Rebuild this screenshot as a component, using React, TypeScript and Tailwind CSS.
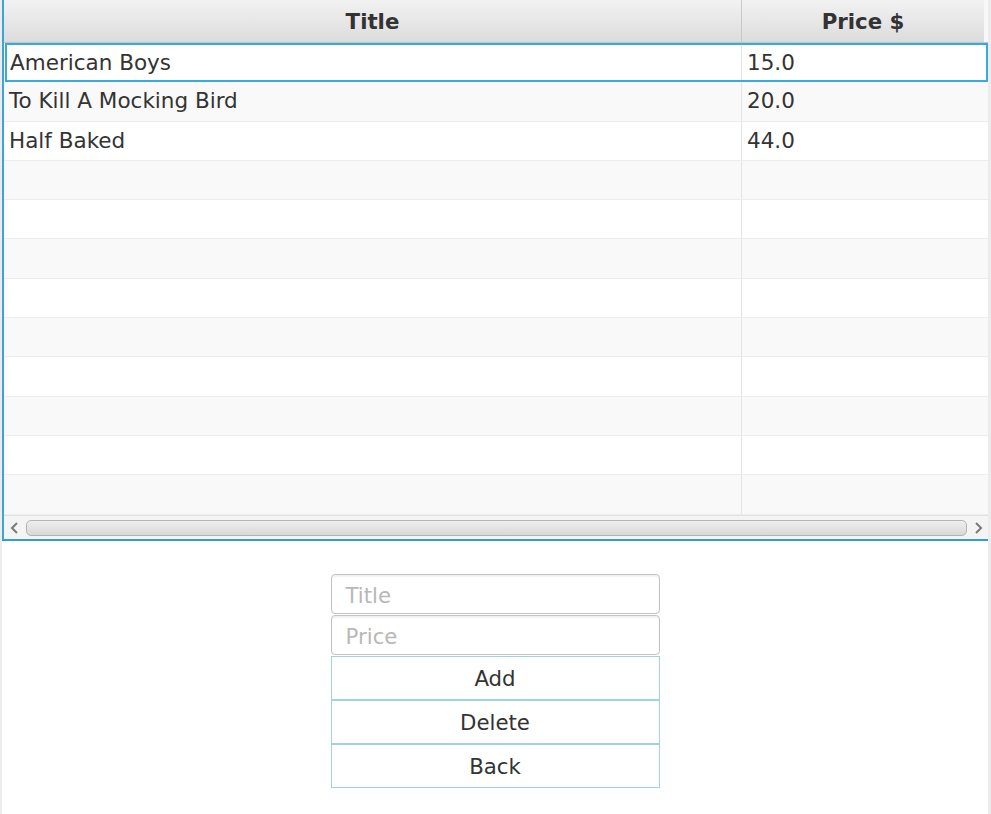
import React from "react";

const rows = [
  { title: "American Boys", price: "15.0" },
  { title: "To Kill A Mocking Bird", price: "20.0" },
  { title: "Half Baked", price: "44.0" },
];

export default function App() {
  const all = Array.from({ length: 13 }, (_, i) => rows[i] ?? null);
  return (
    <div
      className="w-[991px] h-[814px] bg-white flex flex-col border-l-[2px] border-r-[3px] border-[#ececec] overflow-hidden text-[#333]"
      style={{ fontFamily: '"DejaVu Sans", Verdana, sans-serif' }}
    >
      {/* Table */}
      <div className="h-[541px] flex flex-col border-l-2 border-b-2 border-l-[#3aa6d8] border-b-[#2c9fd5] bg-white">
        {/* header */}
        <div className="h-[43px] flex border-b border-[#c4c4c4] shrink-0">
          <div className="w-[738px] flex items-center justify-center pt-[2px] font-bold text-[21.3px] bg-gradient-to-b from-[#f2f2f2] to-[#dcdcdc] border-r border-[#c8c8c8]">
            Title
          </div>
          <div className="w-[242px] flex items-center justify-center pt-[2px] font-bold text-[21.3px] bg-gradient-to-b from-[#f2f2f2] to-[#dcdcdc]">
            Price $
          </div>
          <div className="flex-1 bg-[#f8f8f8]" />
        </div>
        {/* rows */}
        <div className="h-[472px] overflow-hidden shrink-0">
          {all.map((r, i) => {
            const sel = i === 0;
            return (
              <div
                key={i}
                className={`h-[39.3px] flex text-[21.5px] ${
                  sel
                    ? "bg-white border-2 border-[#3aaad9] ml-[1px]"
                    : i % 2 === 1
                    ? "bg-[#f9f9f9] border-b border-[#ececec]"
                    : "bg-white border-b border-[#ececec]"
                }`}
              >
                <div
                  className={`${sel ? "w-[735px] pl-[3px]" : "w-[738px] pl-[5px]"} flex items-center border-r border-[#e4e4e4]`}
                >
                  {r?.title}
                </div>
                <div className="flex-1 flex items-center pl-[5px]">{r?.price}</div>
              </div>
            );
          })}
        </div>
        {/* scrollbar */}
        <div className="h-[24px] flex items-center bg-[#f4f4f4] shrink-0 border-t border-[#e2e2e2]">
          <svg width="18" height="20" viewBox="0 0 18 20" className="ml-[2px] shrink-0">
            <path d="M11 5 L6 10 L11 15" fill="none" stroke="#7a7a7a" strokeWidth="2" />
          </svg>
          <div className="flex-1 h-[16px] mx-[2px] rounded-[5px] border border-[#b4b4b4] bg-gradient-to-b from-[#eeeeee] to-[#d8d8d8]" />
          <svg width="18" height="20" viewBox="0 0 18 20" className="mr-[1px] shrink-0">
            <path d="M7 5 L12 10 L7 15" fill="none" stroke="#7a7a7a" strokeWidth="2" />
          </svg>
        </div>
      </div>

      {/* Form */}
      <div className="flex justify-center pt-[33px]">
        <div className="w-[329px] flex flex-col">
          <div className="h-[40px] rounded-[4px] border border-[#c2c2c2] bg-white shadow-[inset_0_2px_2px_rgba(0,0,0,0.06)] flex items-center pl-[14px] pt-[3px] text-[21.3px] text-[#b8b8b8]">
            Title
          </div>
          <div className="h-[40px] mt-[1px] rounded-[4px] border border-[#c2c2c2] bg-white shadow-[inset_0_2px_2px_rgba(0,0,0,0.06)] flex items-center pl-[14px] pt-[3px] text-[21.3px] text-[#b8b8b8]">
            Price
          </div>
          <div className="h-[1px]" />
          {["Add", "Delete", "Back"].map((b) => (
            <div
              key={b}
              className="h-[44px] border border-[#9fd2e5] bg-white flex items-center justify-center pt-[2px] text-[21.3px] text-[#333]"
            >
              {b}
            </div>
          ))}
        </div>
      </div>
    </div>
  );
}
